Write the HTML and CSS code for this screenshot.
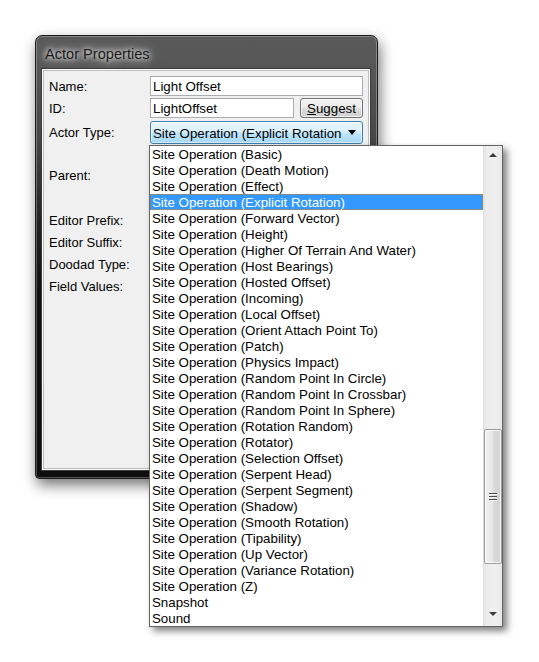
FILE: index.html
```html
<!DOCTYPE html>
<html>
<head>
<meta charset="utf-8">
<link rel="stylesheet" href="styles.css">
</head>
<body>
<div class="stage">
  <div class="window">
    <div class="titlebar"><span class="title">Actor Properties</span></div>
    <div class="panel">
      <div class="row r-name">
        <span class="label">Name:</span>
        <div class="input wide">Light Offset</div>
      </div>
      <div class="row r-id">
        <span class="label">ID:</span>
        <div class="input short">LightOffset</div>
        <div class="button"><u>S</u>uggest</div>
      </div>
      <div class="row r-type">
        <span class="label">Actor Type:</span>
        <div class="combo">
          <span class="combo-text">Site Operation (Explicit Rotation</span>
          <span class="combo-arrow"></span>
          <div class="dropdown">
            <ul class="items">
              <li>Site Operation (Basic)</li>
              <li>Site Operation (Death Motion)</li>
              <li>Site Operation (Effect)</li>
              <li class="sel">Site Operation (Explicit Rotation)</li>
              <li>Site Operation (Forward Vector)</li>
              <li>Site Operation (Height)</li>
              <li>Site Operation (Higher Of Terrain And Water)</li>
              <li>Site Operation (Host Bearings)</li>
              <li>Site Operation (Hosted Offset)</li>
              <li>Site Operation (Incoming)</li>
              <li>Site Operation (Local Offset)</li>
              <li>Site Operation (Orient Attach Point To)</li>
              <li>Site Operation (Patch)</li>
              <li>Site Operation (Physics Impact)</li>
              <li>Site Operation (Random Point In Circle)</li>
              <li>Site Operation (Random Point In Crossbar)</li>
              <li>Site Operation (Random Point In Sphere)</li>
              <li>Site Operation (Rotation Random)</li>
              <li>Site Operation (Rotator)</li>
              <li>Site Operation (Selection Offset)</li>
              <li>Site Operation (Serpent Head)</li>
              <li>Site Operation (Serpent Segment)</li>
              <li>Site Operation (Shadow)</li>
              <li>Site Operation (Smooth Rotation)</li>
              <li>Site Operation (Tipability)</li>
              <li>Site Operation (Up Vector)</li>
              <li>Site Operation (Variance Rotation)</li>
              <li>Site Operation (Z)</li>
              <li>Snapshot</li>
              <li>Sound</li>
            </ul>
            <div class="scrollbar">
              <div class="sb-btn"><span class="tri-up"></span></div>
              <div class="sb-gap"></div>
              <div class="thumb"><span class="grip"></span><span class="grip"></span><span class="grip"></span></div>
              <div class="sb-rest"></div>
              <div class="sb-btn down"><span class="tri-down"></span></div>
            </div>
          </div>
        </div>
      </div>
      <div class="row r-parent"><span class="label">Parent:</span></div>
      <div class="row r-small sp"><span class="label">Editor Prefix:</span></div>
      <div class="row r-small"><span class="label">Editor Suffix:</span></div>
      <div class="row r-small"><span class="label">Doodad Type:</span></div>
      <div class="row r-small"><span class="label">Field Values:</span></div>
    </div>
  </div>
</div>
</body>
</html>
```

FILE: styles.css
```css
html, body {
  margin: 0;
  padding: 0;
  background: #ffffff;
}
body {
  width: 539px;
  height: 662px;
  overflow: hidden;
  font-family: "Liberation Sans", Arial, sans-serif;
  font-size: 13px;
  color: #000;
}
.stage {
  padding: 35px 0 0 35px;
}
.window {
  width: 343px;
  height: 444px;
  box-sizing: border-box;
  border: 1px solid #1c1c1c;
  border-radius: 7px 7px 4px 4px;
  background: linear-gradient(to bottom, #595959 0px, #555555 40px, #474747 100px, #222 190px, #111 260px, #0e0e0e 100%);
  box-shadow: inset 0 0 0 1px rgba(255,255,255,0.28), 2px 6px 14px rgba(0,0,0,0.55);
  display: flex;
  flex-direction: column;
}
.titlebar {
  height: 33px;
  display: flex;
  align-items: center;
  padding-left: 9px;
}
.title {
  font-size: 14.6px;
  color: #1b1b1b;
  padding-top: 2px;
  text-shadow: 0 0 5px rgba(255,255,255,0.95), 0 0 10px rgba(255,255,255,0.8), 0 0 16px rgba(255,255,255,0.6);
}
.panel {
  flex: 1;
  margin: 0 7px 8px 6px;
  background: #f0f0f0;
  border: 1px solid #fdfdfd;
  box-shadow: 0 0 0 1px #3a3a3a, inset 0 0 0 1px #bdbdbd;
  padding: 6px 6px 0 6px;
  display: flex;
  flex-direction: column;
  gap: 2px;
}
.row {
  display: flex;
  align-items: center;
  height: 20px;
}
.label {
  width: 101px;
  flex: none;
}
.r-type {
  height: 23px;
  margin-top: 1px;
}
.r-parent {
  height: 59px;
}
.r-small.sp {
  margin-top: 3px;
}
.input {
  box-sizing: border-box;
  height: 20px;
  border: 1px solid #abadb3;
  border-top-color: #a6a8ad;
  background: #fff;
  padding: 0 2px;
  line-height: 19px;
  white-space: nowrap;
  font-size: 13.3px;
}
.input.wide { width: 213px; }
.input.short { width: 144px; }
.button {
  box-sizing: border-box;
  margin-left: 6px;
  width: 63px;
  height: 20px;
  border: 1px solid #707070;
  border-radius: 3px;
  background: linear-gradient(#f2f2f2 0%, #ebebeb 50%, #dddddd 51%, #cfcfcf 100%);
  box-shadow: inset 0 0 0 1px rgba(255,255,255,0.7);
  text-align: center;
  line-height: 19px;
  font-size: 13.3px;
}
.combo {
  position: relative;
  box-sizing: border-box;
  width: 214px;
  height: 23px;
  border: 1px solid #3c7fb1;
  border-radius: 3px;
  background: linear-gradient(#eaf6fd 0%, #d9f0fc 48%, #bee6fd 52%, #a7d9f5 100%);
  box-shadow: inset 0 0 0 1px rgba(255,255,255,0.55);
  display: flex;
  align-items: center;
  padding-left: 2px;
  font-size: 13.3px;
}
.combo-text {
  width: 191px;
  white-space: nowrap;
  padding-top: 1px;
}
.combo-arrow {
  margin-left: 4px;
  width: 0;
  height: 0;
  border-left: 4px solid transparent;
  border-right: 4px solid transparent;
  border-top: 5px solid #000;
}
.dropdown {
  position: absolute;
  top: 23px;
  left: -2px;
  width: 354px;
  height: 482px;
  box-sizing: border-box;
  border: 1px solid #646464;
  background: #fff;
  box-shadow: 4px 4px 7px rgba(0,0,0,0.5);
  display: flex;
  z-index: 5;
}
.items {
  list-style: none;
  margin: 0;
  padding: 0;
  width: 333px;
  font-size: 13.3px;
}
.items li {
  box-sizing: border-box;
  height: 16px;
  line-height: 16px;
  padding: 1px 0 0 2px;
  white-space: nowrap;
  overflow: hidden;
}
.items li.sel {
  background: #3399ff;
  color: #fff;
  outline: 1px dotted #d0801a;
  outline-offset: -1px;
}
.scrollbar {
  width: 19px;
  background: linear-gradient(to right, #e3e3e3 0px, #ececec 2px, #f0f0f0 60%, #e8e8e8 100%);
  border-left: 1px solid #e0e0e0;
  box-sizing: border-box;
  display: flex;
  flex-direction: column;
}
.sb-btn {
  height: 17px;
  display: flex;
  align-items: center;
  justify-content: center;
}
.sb-btn.down {
  align-items: flex-start;
  padding-top: 3px;
  box-sizing: border-box;
}
.tri-up {
  width: 0;
  height: 0;
  border-left: 4px solid transparent;
  border-right: 4px solid transparent;
  border-bottom: 4px solid #3d3d3d;
}
.tri-down {
  width: 0;
  height: 0;
  border-left: 4px solid transparent;
  border-right: 4px solid transparent;
  border-top: 4px solid #3d3d3d;
}
.sb-gap {
  height: 266px;
}
.thumb {
  height: 135px;
  box-sizing: border-box;
  border: 1px solid #9b9b9b;
  border-radius: 2px;
  background: linear-gradient(to right, #f2f2f2 0%, #e8e8e8 45%, #d9d9d9 55%, #d3d3d3 100%);
  box-shadow: inset 0 0 0 1px rgba(255,255,255,0.75);
  display: flex;
  flex-direction: column;
  align-items: center;
  justify-content: center;
  gap: 2px;
}
.grip {
  width: 8px;
  height: 1px;
  background: #4a4a4a;
  box-shadow: 0 1px 0 #f8f8f8;
}
.sb-rest {
  flex: 1;
}
```
